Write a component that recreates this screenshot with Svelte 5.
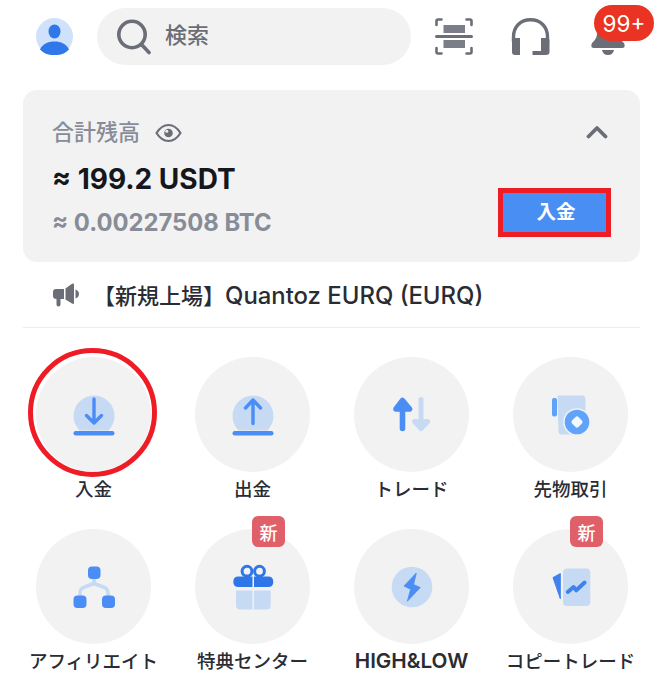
<script>
  const items = [
    { label: '入金', icon: 'deposit', ring: true },
    { label: '出金', icon: 'withdraw' },
    { label: 'トレード', icon: 'trade' },
    { label: '先物取引', icon: 'futures' },
    { label: 'アフィリエイト', icon: 'affiliate' },
    { label: '特典センター', icon: 'gift', isNew: true },
    { label: 'HIGH&LOW', icon: 'bolt', latin: true },
    { label: 'コピートレード', icon: 'copy', isNew: true }
  ];
</script>

<div class="page">
  <header class="top">
    <svg class="avatar" viewBox="0 0 37 37">
      <circle cx="18.5" cy="18.5" r="18.5" fill="#cfe1fb" />
      <ellipse cx="18.5" cy="13.5" rx="6" ry="7" fill="#2f78ea" />
      <path d="M4 31.5C6.5 26 12 23.5 18.5 23.5S30.5 26 33 31.5A18.5 18.5 0 0 1 18.5 37 18.5 18.5 0 0 1 4 31.5Z" fill="#2f78ea" />
    </svg>
    <div class="search">
      <svg class="search-icon" viewBox="0 0 36 36" fill="none" stroke="#6b6e76" stroke-width="3.6" stroke-linecap="round">
        <circle cx="16" cy="15.5" r="13.2" />
        <path d="M26 26l7 7.5" />
      </svg>
      <span>検索</span>
    </div>
    <svg class="scan" viewBox="0 0 38 37" fill="none">
      <g stroke="#6b6e76" stroke-width="2.6" stroke-linecap="round" stroke-linejoin="round">
        <path d="M1.5 7V3Q1.5 1.5 3 1.5H6.5M31.5 1.5H35Q36.5 1.5 36.5 3V7M1.5 30V34Q1.5 35.5 3 35.5H6.5M31.5 35.5H35Q36.5 35.5 36.5 34V30" />
      </g>
      <rect x="8.5" y="7" width="21.500" height="8" fill="#7a7e88" />
      <rect x="0" y="17" width="38" height="3" rx="1.500" fill="#6b6e76" />
      <rect x="8.5" y="22" width="21.500" height="8" fill="#7a7e88" />
    </svg>
    <svg class="headset" viewBox="0 0 39 37" fill="none">
      <path d="M2.500 24V19C2.500 8.500 9.500 1.800 19.500 1.800S36.500 8.500 36.500 19V24" stroke="#6b6e76" stroke-width="3.400" />
      <path d="M1 22.500Q1 20 3.500 20H9V37H4Q1 37 1 34Z" fill="#6b6e76" />
      <path d="M38.500 22.500Q38.500 20 36 20H30V33H21.500V37H35Q38.500 37 38.500 34Z" fill="#6b6e76" />
    </svg>
    <div class="bell-wrap">
      <svg class="bell" viewBox="0 0 34 37">
        <path d="M17 0C8 0 6 8 6 15C6 20 4 22 1 25Q-1 30 3 30H31Q35 30 33 25C30 22 28 20 28 15C28 8 26 0 17 0Z" fill="#6b6e76" />
        <path d="M11 32H23Q22 37 17 37T11 32Z" fill="#6b6e76" />
      </svg>
      <span class="count">99+</span>
    </div>
  </header>

  <section class="card">
    <div class="balance">
      <div class="title">
        <span>合計残高</span>
        <svg class="eye" viewBox="0 0 27 20" fill="none">
          <path d="M1.500 10C5 4.500 9 2 13.500 2S22 4.500 25.500 10C22 15.500 18 18 13.500 18S5 15.500 1.500 10Z" stroke="#6b6e76" stroke-width="2.200" stroke-linejoin="round" />
          <circle cx="13.500" cy="10" r="4.300" fill="#6b6e76" />
          <circle cx="11.800" cy="8.300" r="1.500" fill="#f2f2f2" />
        </svg>
      </div>
      <div class="usdt">≈ 199.2 USDT</div>
      <div class="btc">≈ 0.00227508 BTC</div>
    </div>
    <div class="actions">
      <svg class="chevron" viewBox="0 0 22 14" fill="none">
        <path d="M2.500 11.500L11 3l8.500 8.500" stroke="#6b6e76" stroke-width="3.800" stroke-linecap="round" stroke-linejoin="round" />
      </svg>
      <button class="deposit">入金</button>
    </div>
  </section>

  <div class="notice">
    <svg class="horn" viewBox="0 0 26 24">
      <path d="M0 9Q0 6 3 6H11V16H7.500L7.500 21.500Q7.500 23.500 5.500 23.500T3.500 21.500V16Q0 16 0 13Z" fill="#6b6e76" />
      <path d="M12.500 5.500L19 .8Q21 0 21 2V20Q21 21.500 19 20.500L12.500 16.500Z" fill="#6b6e76" />
      <path d="M22.500 6.500Q26 8 26 11T22.500 15.500Z" fill="#6b6e76" />
    </svg>
    <span class="news">【新規上場】<span class="news-latin">Quantoz EURQ (EURQ)</span></span>
  </div>

  <div class="grid">
    {#each items as item}
      <div class="item">
        <div class="disc">
          <svg class="glyph" viewBox="0 0 48 48" fill="none">
            {#if item.icon === 'deposit' || item.icon === 'withdraw'}
              <path d="M9.500 39.500A20.500 20.500 0 1 1 38.500 39.500Z" fill="#c7daf4" />
              <rect x="3.500" y="40" width="41" height="4.500" rx="2.200" fill="#4a8df5" />
              {#if item.icon === 'deposit'}
                <path d="M24 8V32M16.500 24.500L24 32L31.500 24.500" stroke="#4a8df5" stroke-width="3.400" stroke-linecap="round" stroke-linejoin="round" />
              {:else}
                <path d="M24 32.500V9M16.500 17L24 9L31.500 17" stroke="#4a8df5" stroke-width="3.400" stroke-linecap="round" stroke-linejoin="round" />
              {/if}
            {:else if item.icon === 'trade'}
              <path d="M33 8.500V37M26.500 30.500L33 37.500L39.800 30.500Z" stroke="#c7daf4" stroke-width="5" stroke-linecap="round" stroke-linejoin="round" fill="#c7daf4" />
              <path d="M14.500 37.500V10M8 18L14.500 9.500L21.500 18Z" stroke="#4a8df5" stroke-width="5.600" stroke-linecap="round" stroke-linejoin="round" fill="#4a8df5" />
            {:else if item.icon === 'futures'}
              <path d="M10.500 4.500H35Q38.500 4.500 38.500 8V40Q38.500 43.500 35 43.500H15Q11.500 43.500 11.500 40Z" fill="#c7daf4" />
              <rect x="5" y="7" width="5" height="18.500" rx="2" fill="#5fa2f8" />
              <circle cx="30" cy="31" r="13.800" fill="#f2f2f2" />
              <circle cx="30" cy="31" r="12.300" fill="#60a3fa" />
              <rect x="25.500" y="26.500" width="9" height="9" rx="2" fill="#f5f8fd" transform="rotate(45 30 31)" />
            {:else if item.icon === 'affiliate'}
              <path d="M24 15V20.500L14.500 24Q10 25.500 10 30V34M24 20.500L33.500 24Q38 25.500 38 30V34" stroke="#c7daf4" stroke-width="3.600" stroke-linejoin="round" />
              <rect x="18" y="3.500" width="12.500" height="12.500" rx="4" fill="#4a8df5" />
              <rect x="3.500" y="32.500" width="13" height="12.500" rx="4" fill="#4a8df5" />
              <rect x="32" y="32.500" width="13" height="12.500" rx="4" fill="#4a8df5" />
            {:else if item.icon === 'gift'}
              <circle cx="18" cy="8.200" r="4.900" stroke="#2f76e8" stroke-width="3" />
              <circle cx="30.500" cy="8.200" r="4.900" stroke="#2f76e8" stroke-width="3" />
              <path d="M9.500 13.500H23.500V24H9.500Q4.300 24 4.300 18.800T9.500 13.500ZM25 13.500H39Q44.300 13.500 44.300 18.800T39 24H25Z" fill="#2f76e8" />
              <path d="M7 27.500H23.500V46.500H11Q7 46.500 7 42.500ZM25 27.500H41.700V42.500Q41.700 46.500 37.700 46.500H25Z" fill="#c7daf4" />
            {:else if item.icon === 'bolt'}
              <circle cx="24" cy="24" r="20.300" fill="#c7daf4" />
              <path d="M28.300 10L16 23L22.600 26.300L19.300 38.300L32.300 24.600L25.600 21.600Z" fill="#4a8df5" stroke="#4a8df5" stroke-width="0.800" stroke-linejoin="round" />
            {:else if item.icon === 'copy'}
              <path d="M6 14.600L13.300 10.600V35.600Z" fill="#3f82ee" stroke="#3f82ee" stroke-width="1" stroke-linejoin="round" />
              <rect x="16" y="5.600" width="27.300" height="37.400" rx="4" fill="#c7daf4" />
              <path d="M20.800 29L26.600 24L29.300 27.300L37.600 19.500" stroke="#3f82ee" stroke-width="4" stroke-linecap="round" stroke-linejoin="round" />
            {/if}
          </svg>
          {#if item.isNew}<span class="new">新</span>{/if}
          {#if item.ring}<span class="ring"></span>{/if}
        </div>
        <div class="label" class:latin={item.latin}>{item.label}</div>
      </div>
    {/each}
  </div>
</div>

<style>
  :global(body) {
    margin: 0;
    background: #fff;
    overflow: hidden;
  }
  .page {
    width: 657px;
    height: 690px;
    overflow: hidden;
    font-family: Inter, "Noto Sans CJK JP", sans-serif;
    box-sizing: border-box;
    padding-top: 8px;
  }
  .top {
    display: flex;
    align-items: center;
    height: 57px;
    padding-left: 36px;
    margin-bottom: 25px;
  }
  .avatar {
    width: 37px;
    height: 37px;
    margin-right: 24px;
    flex: none;
  }
  .search {
    width: 314px;
    height: 57px;
    flex: none;
    border-radius: 28.5px;
    background: #f2f2f2;
    display: flex;
    align-items: center;
    gap: 13px;
    padding-left: 19px;
    box-sizing: border-box;
    color: #6b6e76;
    font-size: 22px;
    font-weight: 500;
  }
  .search span {
    margin-bottom: 8px;
  }
  .search-icon {
    width: 36px;
    height: 36px;
    flex: none;
  }
  .scan {
    width: 38px;
    height: 37px;
    margin-left: 24px;
    flex: none;
  }
  .headset {
    width: 39px;
    height: 37px;
    margin-left: 38px;
    flex: none;
  }
  .bell-wrap {
    position: relative;
    margin-left: 41px;
    width: 34px;
    height: 37px;
    flex: none;
  }
  .bell {
    display: block;
    width: 34px;
    height: 37px;
  }
  .count {
    position: absolute;
    left: 3px;
    top: -13px;
    width: 60px;
    height: 36px;
    border-radius: 18px;
    background: #ea3323;
    color: #fff;
    font-size: 22.500px;
    font-weight: 400;
    display: flex;
    align-items: center;
    justify-content: center;
  }
  .card {
    margin: 0 17px 0 23px;
    height: 172px;
    border-radius: 14px;
    background: #f2f2f2;
    display: flex;
    justify-content: space-between;
    padding: 28px 29px 25px 29px;
    box-sizing: border-box;
  }
  .title {
    display: flex;
    align-items: center;
    gap: 15px;
    height: 30px;
    color: #878c96;
    font-size: 22px;
    font-weight: 500;
  }
  .title span {
    margin-bottom: 6px;
  }
  .eye {
    width: 27px;
    height: 20px;
  }
  .usdt {
    margin-top: 14px;
    height: 34px;
    line-height: 34px;
    font-size: 28px;
    font-weight: 700;
    color: #15171c;
  }
  .btc {
    margin-top: 11px;
    height: 32px;
    line-height: 32px;
    font-size: 23.800px;
    font-weight: 650;
    color: #878c96;
  }
  .actions {
    display: flex;
    flex-direction: column;
    align-items: flex-end;
    justify-content: space-between;
  }
  .chevron {
    width: 22px;
    height: 14px;
    margin-top: 7px;
    margin-right: 3px;
  }
  .deposit {
    width: 113px;
    height: 49px;
    box-sizing: border-box;
    margin: 0;
    border: 5px solid #ee1c25;
    background: #488ef3;
    color: #fff;
    font-family: inherit;
    font-size: 19.500px;
    font-weight: 700;
    padding: 0 0 4px 3px;
  }
  .notice {
    margin: 0 17px 0 23px;
    height: 66px;
    box-sizing: border-box;
    border-bottom: 1px solid #ececec;
    display: flex;
    align-items: center;
    padding-left: 30px;
    gap: 14px;
    color: #2a2c33;
    font-size: 22px;
    font-weight: 500;
  }
  .news {
    margin-bottom: 2px;
  }
  .news-latin {
    font-size: 23.900px;
  }
  .horn {
    width: 26px;
    height: 24px;
    flex: none;
  }
  .grid {
    display: grid;
    grid-template-columns: repeat(4, 159px);
    grid-auto-rows: 172px;
    padding-left: 14px;
    margin-top: 29px;
  }
  .item {
    display: flex;
    flex-direction: column;
    align-items: center;
  }
  .disc {
    position: relative;
    width: 115px;
    height: 115px;
    border-radius: 50%;
    background: #f2f2f2;
    display: flex;
    align-items: center;
    justify-content: center;
  }
  .glyph {
    width: 48px;
    height: 48px;
  }
  .new {
    position: absolute;
    left: 57px;
    top: -13px;
    width: 33px;
    height: 31px;
    border-radius: 6px;
    background: #e0606a;
    color: #fff;
    font-size: 18px;
    font-weight: 500;
    display: flex;
    align-items: center;
    justify-content: center;
  }
  .ring {
    position: absolute;
    left: -8px;
    top: -9px;
    width: 129px;
    height: 129px;
    border: 5.500px solid #ee1c25;
    border-radius: 50%;
    box-sizing: border-box;
  }
  .label {
    margin-top: 4px;
    height: 26px;
    line-height: 26px;
    font-size: 18.500px;
    font-weight: 500;
    color: #2a2c33;
    white-space: nowrap;
  }
  .label.latin {
    font-size: 20.700px;
    font-weight: 600;
  }
</style>
